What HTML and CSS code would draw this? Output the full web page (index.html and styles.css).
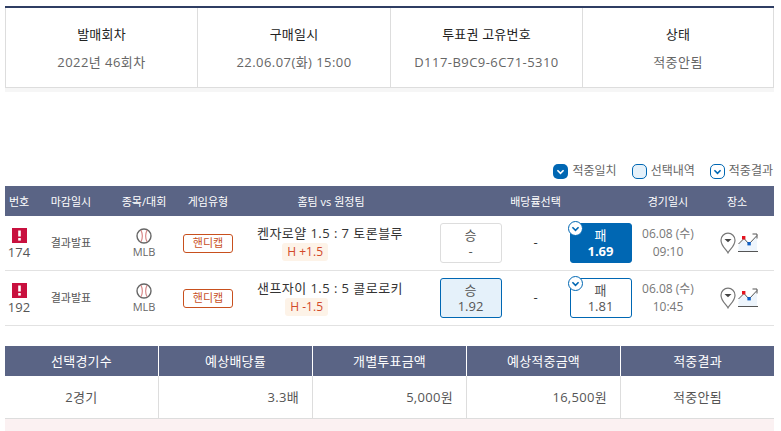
FILE: index.html
```html
<!DOCTYPE html>
<html lang="ko">
<head>
<meta charset="utf-8">
<title>투표권 상세</title>
<link rel="stylesheet" href="styles.css">
</head>
<body>
<svg class="defs" width="0" height="0" aria-hidden="true">
  <symbol id="ball" viewBox="0 0 16 16">
    <circle cx="8" cy="8" r="7" fill="#fff" stroke="#666" stroke-width="1.4"/>
    <path d="M5 2.2C6.6 5.6 6.6 10.4 5 13.8M11 2.2C9.4 5.6 9.4 10.4 11 13.8" fill="none" stroke="#d98a8a" stroke-width="1.2"/>
  </symbol>
  <symbol id="alert" viewBox="0 0 15 15">
    <rect width="15" height="15" fill="#c8103e"/>
    <rect x="6.2" y="2.5" width="2.6" height="6" fill="#fff"/>
    <rect x="6.2" y="10" width="2.6" height="2.6" fill="#fff"/>
  </symbol>
  <symbol id="pin" viewBox="0 0 16 22">
    <path d="M8 20.8C6.6 17.6 1 14.2 1 8.2a7 7 0 0 1 14 0C15 14.2 9.4 17.6 8 20.8Z" fill="#fff" stroke="#777" stroke-width="1.2"/>
    <path d="M4.5 7h7L8 10.2Z" fill="#444"/>
  </symbol>
  <symbol id="chart" viewBox="0 0 20 19">
    <path d="M0.5 11.5 6 6l5 5.5 8-8V18H0.5Z" fill="#eef5fc"/>
    <path d="M0.5 11 6 5.5l5 5.5 8-8.5M14.5 1H19v4.5" fill="none" stroke="#555" stroke-width="1"/>
    <rect x="4" y="3" width="3.4" height="3.4" fill="#e5131f"/>
    <rect x="9.4" y="9" width="3.4" height="3.4" fill="#0f5fc4"/>
    <rect y="18" width="20" height="1" fill="#555"/>
  </symbol>
  <symbol id="check" viewBox="0 0 16 16">
    <path d="M4.2 6.4 8 10.2l3.8-3.8" fill="none" stroke="currentColor" stroke-width="2"/>
  </symbol>
</svg>

<main class="page">
  <section class="info">
    <div class="info-cell"><div class="info-label">발매회차</div><div class="info-value">2022년 46회차</div></div>
    <div class="info-cell"><div class="info-label">구매일시</div><div class="info-value">22.06.07(화) 15:00</div></div>
    <div class="info-cell"><div class="info-label">투표권 고유번호</div><div class="info-value">D117-B9C9-6C71-5310</div></div>
    <div class="info-cell"><div class="info-label">상태</div><div class="info-value">적중안됨</div></div>
  </section>

  <ul class="legend">
    <li class="legend-item"><span class="swatch swatch-hit"><svg class="swatch-check"><use href="#check"/></svg></span>적중일치</li>
    <li class="legend-item"><span class="swatch swatch-picked"></span>선택내역</li>
    <li class="legend-item"><span class="swatch swatch-result"><svg class="swatch-check"><use href="#check"/></svg></span>적중결과</li>
  </ul>

  <section class="games">
    <div class="games-row games-head">
      <div>번호</div><div>마감일시</div><div>종목/대회</div><div>게임유형</div><div>홈팀 vs 원정팀</div><div class="col-odds">배당률선택</div><div>경기일시</div><div class="col-place">장소</div>
    </div>

    <div class="games-row game">
      <div class="no"><svg class="alert"><use href="#alert"/></svg><span>174</span></div>
      <div class="close">결과발표</div>
      <div class="sport"><svg class="ball"><use href="#ball"/></svg><span>MLB</span></div>
      <div><span class="type">핸디캡</span></div>
      <div class="teams"><div class="score">켄자로얄 1.5 : 7 토론블루</div><div class="hcap-row"><span class="hcap">H +1.5</span></div></div>
      <div class="col-odds odds">
        <div class="pick"><span>승</span><span>-</span></div>
        <div class="draw">-</div>
        <div class="pick pick-hit"><span>패</span><span class="odd-strong">1.69</span><i class="mark"><svg><use href="#check"/></svg></i></div>
      </div>
      <div class="date"><span>06.08 (수)</span><span>09:10</span></div>
      <div class="col-place place"><svg class="pin"><use href="#pin"/></svg><svg class="chart"><use href="#chart"/></svg></div>
    </div>

    <div class="games-row game">
      <div class="no"><svg class="alert"><use href="#alert"/></svg><span>192</span></div>
      <div class="close">결과발표</div>
      <div class="sport"><svg class="ball"><use href="#ball"/></svg><span>MLB</span></div>
      <div><span class="type">핸디캡</span></div>
      <div class="teams"><div class="score">샌프자이 1.5 : 5 콜로로키</div><div class="hcap-row"><span class="hcap">H -1.5</span></div></div>
      <div class="col-odds odds">
        <div class="pick pick-chosen"><span>승</span><span>1.92</span></div>
        <div class="draw">-</div>
        <div class="pick pick-result"><span>패</span><span>1.81</span><i class="mark"><svg><use href="#check"/></svg></i></div>
      </div>
      <div class="date"><span>06.08 (수)</span><span>10:45</span></div>
      <div class="col-place place"><svg class="pin"><use href="#pin"/></svg><svg class="chart"><use href="#chart"/></svg></div>
    </div>
  </section>

  <section class="summary">
    <div class="sum-head">선택경기수</div>
    <div class="sum-head">예상배당률</div>
    <div class="sum-head">개별투표금액</div>
    <div class="sum-head">예상적중금액</div>
    <div class="sum-head">적중결과</div>
    <div class="sum-cell">2경기</div>
    <div class="sum-cell sum-num">3.3배</div>
    <div class="sum-cell sum-num">5,000원</div>
    <div class="sum-cell sum-num">16,500원</div>
    <div class="sum-cell">적중안됨</div>
  </section>
  <div class="notice"></div>
</main>
</body>
</html>
```
FILE: styles.css
```css
* { box-sizing: border-box; }
html, body { margin: 0; height: 431px; overflow: hidden; background: #fff; }
body { font-family: "Open Sans", "Noto Sans CJK KR", sans-serif; color: #333; }
.defs { position: absolute; }
.page { padding: 6px 7px 0 5px; }

.info {
  display: grid;
  grid-template-columns: 192px 193px 192px 192px;
  border-top: 2px solid #2f3e63;
  border-bottom: 5px solid #f6f6f6;
  height: 86px;
}
.info-cell {
  border-left: 1px solid #ddd;
  border-bottom: 1px solid #ddd;
  height: 80px;
  text-align: center;
  padding-top: 15px;
}
.info-cell:last-child { border-right: 1px solid #ddd; }
.info-label { font-size: 13px; line-height: 22px; color: #222; letter-spacing: 0.2px; }
.info-value { font-size: 13px; line-height: 22px; margin-top: 6px; color: #666; letter-spacing: 0.45px; }

.legend {
  list-style: none;
  margin: 70px 0 0;
  padding: 0 1px 0 0;
  height: 24px;
  display: flex;
  justify-content: flex-end;
  gap: 15px;
  font-size: 12px;
  color: #666;
}
.legend-item { display: flex; align-items: flex-start; gap: 4px; line-height: 18px; }
.swatch { width: 15px; height: 15px; border-radius: 5px; margin-top: 2px; display: block; }
.swatch-hit { background: #0067b3; color: #fff; }
.swatch-picked { background: #e5f1fa; border: 1px solid #0067b3; }
.swatch-result { border: 1px solid #0067b3; color: #0067b3; }
.swatch-check { width: 13px; height: 13px; display: block; margin: 1px; }
.swatch-result .swatch-check { margin: 0; }

.games-row {
  display: grid;
  grid-template-columns: 28px 76px 70px 58px 188px 216px 54px 79px;
  align-items: center;
  text-align: center;
}
.games-head {
  height: 30px;
  background: #5a6485;
  color: #fff;
  font-size: 11px;
  white-space: nowrap;
}
.col-odds { padding-left: 5px; }
.col-place { padding-left: 5px; }

.game { height: 55px; border-bottom: 1px solid #e2e2e2; font-size: 11px; color: #555; }
.no { display: flex; flex-direction: column; align-items: center; font-size: 13px; line-height: 18px; color: #555; padding-top: 2px; }
.alert { width: 15px; height: 15px; display: block; }
.close { font-size: 11px; color: #555; margin-top: -3px; }
.sport { display: flex; flex-direction: column; align-items: center; line-height: 15px; color: #666; padding-top: 1px; }
.ball { width: 16px; height: 16px; display: block; }
.type {
  display: inline-block;
  width: 50px;
  height: 19px;
  line-height: 16px;
  border: 1px solid #c8501e;
  border-radius: 3px;
  color: #c8501e;
  font-size: 11px;
}
.teams { color: #333; text-align: left; padding-left: 20px; margin-top: -3px; }
.score { font-size: 13px; line-height: 20px; white-space: nowrap; letter-spacing: 0.45px; }
.hcap-row { width: 71px; display: flex; justify-content: flex-end; }
.hcap {
  height: 18px;
  line-height: 18px;
  padding: 0 5px;
  background: #fdf3e8;
  border-radius: 3px;
  color: #d2492a;
  font-size: 12px;
  white-space: nowrap;
}

.odds { display: flex; justify-content: center; align-items: center; }
.pick {
  position: relative;
  width: 62px;
  height: 40px;
  border: 1px solid #ddd;
  border-radius: 3px;
  display: flex;
  flex-direction: column;
  align-items: center;
  justify-content: center;
  font-size: 13px;
  line-height: 16px;
  color: #555;
}
.pick-chosen { background: #e5f1fa; border-color: #0067b3; }
.pick-hit { background: #0067b3; border-color: #0067b3; color: #fff; }
.pick-result { border-color: #0067b3; }
.odd-strong { font-weight: 700; }
.draw { width: 68px; color: #333; font-size: 13px; margin-top: -2px; }
.mark {
  position: absolute;
  left: -3px;
  top: -3px;
  width: 15px;
  height: 15px;
  border-radius: 50%;
  background: #fff;
  border: 1px solid #0067b3;
  color: #0067b3;
  display: block;
}
.mark svg { width: 13px; height: 13px; display: block; }

.date { display: flex; flex-direction: column; font-size: 12px; line-height: 18px; color: #777; white-space: nowrap; margin-top: -1px; }

.place { display: flex; justify-content: center; align-items: flex-start; gap: 2px; height: 24px; margin-top: 2px; }
.pin { width: 16px; height: 22px; display: block; margin-left: 3px; }
.chart { width: 20px; height: 19px; display: block; margin-top: 1px; }

.summary {
  display: grid;
  grid-template-columns: 153px 154px 154px 154px 154px;
  margin-top: 20px;
  text-align: center;
}
.sum-head {
  height: 30px;
  line-height: 30px;
  background: #5a6485;
  color: #fff;
  font-size: 13px;
  letter-spacing: 0.2px;
  border-left: 1px solid #fff;
}
.sum-head:first-child { border-left: 0; }
.sum-cell {
  height: 43px;
  line-height: 42px;
  font-size: 13px;
  letter-spacing: 0.3px;
  color: #555;
  border-left: 1px solid #ddd;
  border-bottom: 1px solid #ddd;
}
.sum-cell:nth-child(6) { border-left: 0; }
.sum-num { text-align: right; padding-right: 13px; }
.notice { height: 12px; background: #fbf1f2; }
```
